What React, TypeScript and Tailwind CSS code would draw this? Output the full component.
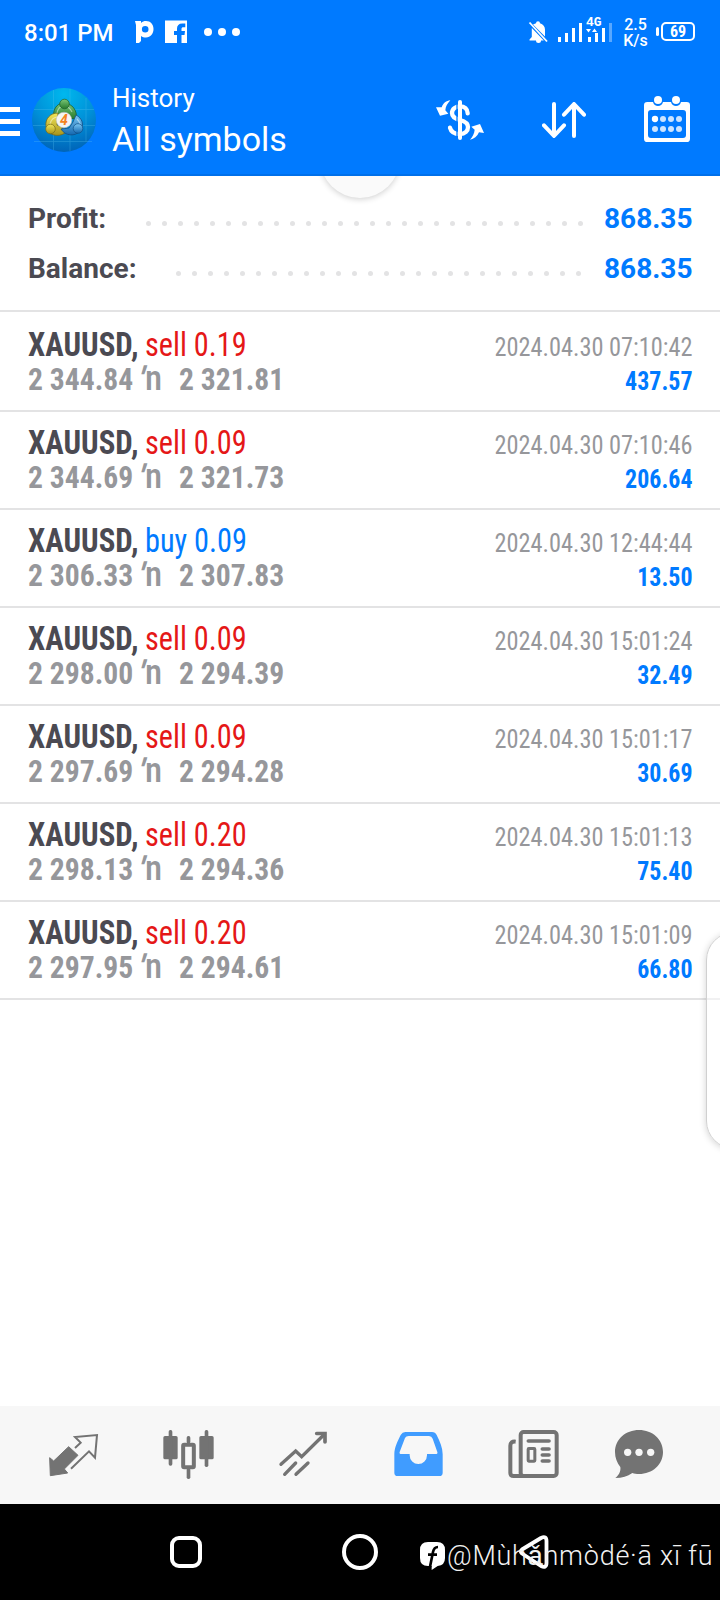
type Deal = {
  side: "sell" | "buy";
  volume: string;
  open: string;
  close: string;
  time: string;
  profit: string;
};

const deals: Deal[] = [
  { side: "sell", volume: "0.19", open: "2 344.84", close: "2 321.81", time: "2024.04.30 07:10:42", profit: "437.57" },
  { side: "sell", volume: "0.09", open: "2 344.69", close: "2 321.73", time: "2024.04.30 07:10:46", profit: "206.64" },
  { side: "buy", volume: "0.09", open: "2 306.33", close: "2 307.83", time: "2024.04.30 12:44:44", profit: "13.50" },
  { side: "sell", volume: "0.09", open: "2 298.00", close: "2 294.39", time: "2024.04.30 15:01:24", profit: "32.49" },
  { side: "sell", volume: "0.09", open: "2 297.69", close: "2 294.28", time: "2024.04.30 15:01:17", profit: "30.69" },
  { side: "sell", volume: "0.20", open: "2 298.13", close: "2 294.36", time: "2024.04.30 15:01:13", profit: "75.40" },
  { side: "sell", volume: "0.20", open: "2 297.95", close: "2 294.61", time: "2024.04.30 15:01:09", profit: "66.80" },
];

function StatusBar() {
  return (
    <div className="flex h-16 items-start text-white">
      <span className="ml-6 mt-[19px] w-[111px] whitespace-nowrap text-2xl font-medium leading-[28px]">8:01 PM</span>
      <svg className="mt-5 h-6 w-[110px]" viewBox="0 0 110 24" fill="#fff">
        {/* Palmpay mark */}
        <path fillRule="evenodd" d="M0 1h6v2c1.500-1.500 3-2 5-2 4.500 0 7.500 3.500 7.500 8s-3 8.500-7.500 8.500c-2 0-3.500-.5-5-1.500v5l-2 2H1V5z M10.200 6a3.300 3.300 0 1 0 0 6.600 3.300 3.300 0 0 0 0-6.600z" />
        {/* Facebook mark */}
        <path d="M30 0.500h22v22.500h-5.500v-8h3l.5-4h-3.500V9c0-1.200.5-1.800 2-1.800h1.800V3.500h-3c-3.500 0-5.300 2-5.300 5V11h-3v4h3v8H30z" />
        <circle cx="73" cy="12" r="4" />
        <circle cx="87" cy="12" r="4" />
        <circle cx="101" cy="12" r="4" />
      </svg>
      <svg className="ml-auto mt-5 h-6 w-[62px]" viewBox="0 0 62 24" fill="#fff">
        <path d="M5 4.500l3-1.300a2 2 0 0 1 4 0c3.200.8 5 3.600 5 6.500v6.800zM3.800 8l12 12.500H1.500v-1L3.800 17zM8 20.500h5a2.400 2.400 0 0 1-5 0z" />
        <path d="M1.500 2.500l17.500 19" stroke="#fff" strokeWidth="1.800" />
        <rect x="30" y="17" width="3" height="5" />
        <rect x="37" y="13" width="3" height="9" />
        <rect x="44" y="8" width="3" height="14" />
        <rect x="51" y="3" width="3" height="19" />
      </svg>
      <div className="relative -ml-1 mt-4 h-7 w-[30px]">
        <span className="absolute left-0 top-0 font-['Liberation_Mono',monospace] text-[13px] font-bold leading-[14px]">4G</span>
        <svg className="h-7 w-[30px]" viewBox="0 0 30 28" fill="#fff">
          <path d="M0 13h5l-2.500 3.500zM6 16h5l-2.500-3.500z" />
          <rect x="2" y="21" width="3" height="5" />
          <rect x="9" y="17" width="3" height="9" />
          <rect x="16" y="12" width="3" height="14" />
          <rect x="23" y="7" width="3" height="19" opacity=".35" />
        </svg>
      </div>
      <div className="ml-[6px] mt-[17px] w-[27px] text-center text-[16px] font-medium leading-[16px]">
        <div>2.5</div>
        <div>K/s</div>
      </div>
      <div className="ml-[7px] mt-[27px] h-[9px] w-[3px] rounded-sm bg-white" />
      <div className="ml-[2px] mr-[25px] mt-[22px] flex h-[19px] w-[34px] items-center justify-center rounded-[5px] border-2 border-white pt-px text-[16px] font-bold leading-none [font-stretch:80%]">
        69
      </div>
    </div>
  );
}

function AppLogo() {
  return (
    <svg className="ml-3 mt-6 h-16 w-16" viewBox="0 0 64 64">
      <defs>
        <radialGradient id="sky" cx=".5" cy=".1" r=".9">
          <stop offset="0" stopColor="#00b8ee" />
          <stop offset=".55" stopColor="#0090d8" />
          <stop offset="1" stopColor="#0064b8" />
        </radialGradient>
        <linearGradient id="green" x2="0" y2="1"><stop stopColor="#7cc878" /><stop offset="1" stopColor="#25792b" /></linearGradient>
        <linearGradient id="gold" x2="0" y2="1"><stop stopColor="#f2e75a" /><stop offset="1" stopColor="#a8941c" /></linearGradient>
        <linearGradient id="blue" x2="0" y2="1"><stop stopColor="#7cc8f4" /><stop offset="1" stopColor="#1468b0" /></linearGradient>
      </defs>
      <circle cx="32" cy="32" r="32" fill="url(#sky)" />
      <path d="M21.500 2v60M54 10v44M2 21.500h60M2 53.500h58M1 37.500h62M38 1v62" stroke="#5cc4f0" strokeWidth=".8" opacity=".35" />
      <path d="M22 31c-2-8 2-16 10-16s14 8 12 16l-7-1-5-6-5 6z" fill="url(#green)" stroke="#1b5f2c" strokeWidth=".8" />
      <path d="M26 25c-8 0-13 6-12 13 1 9 12 12 19 7l-3-6-5-2z" fill="url(#gold)" stroke="#75691a" strokeWidth=".8" />
      <path d="M44 27c6 3 9 10 4 16-5 6-15 5-19-2l8-1 4-6z" fill="url(#blue)" stroke="#114f86" strokeWidth=".8" />
      <path d="M25 25c1-5 4-7 7-7s6 2 8 6M18 36c1-4 4-7 8-7M45 31c3 3 4 6 2 9" stroke="#fff" strokeWidth="1.200" fill="none" opacity=".45" />
      <circle cx="32.500" cy="16" r="4.800" fill="url(#green)" stroke="#1b5f2c" strokeWidth=".7" />
      <circle cx="18.500" cy="41" r="4.800" fill="url(#gold)" stroke="#75691a" strokeWidth=".7" />
      <circle cx="46" cy="40.500" r="4.800" fill="url(#blue)" stroke="#114f86" strokeWidth=".7" />
      <circle cx="32" cy="32" r="7.800" fill="#f4f4f4" stroke="#bbb" strokeWidth=".5" />
      <text x="32" y="37" textAnchor="middle" fontSize="14" fontWeight="700" fontStyle="italic" fill="#f58220">4</text>
    </svg>
  );
}

function Header() {
  return (
    <div className="flex h-28 items-start border-b-2 border-[#0070ea] text-white">
      <div className="mt-[43px] flex w-5 flex-col gap-[7px]">
        <div className="h-[5px] bg-white" />
        <div className="h-[5px] bg-white" />
        <div className="h-[5px] bg-white" />
      </div>
      <AppLogo />
      <div className="ml-4 mt-[18px] whitespace-nowrap">
        <div className="text-[26px] leading-[32px]">History</div>
        <div className="mt-[5px] text-[34px] leading-[40px]">All symbols</div>
      </div>
      {/* currency exchange */}
      <svg className="ml-auto mt-9 h-10 w-12" viewBox="228 300 144 120" fill="none">
        <path d="M323 340c0-13-10-21-23-21s-24 8-24 20 9 17 24 21 24 9 24 21-9 21-24 21-27-7-30-19" stroke="#fff" strokeWidth="13" strokeLinecap="round" />
        <path d="M291 300v120" stroke="#007aff" strokeWidth="4" />
        <path d="M300 306v108" stroke="#fff" strokeWidth="12" strokeLinecap="round" />
        <path d="M271 301c-12 1-22 9-26 21l-17 0 12 25 25-6-9-10c1-11 6-20 15-30z" fill="#fff" />
        <path d="M330 419c12-2 22-10 27-22l15 2-12-27-26 8 10 9c-1 11-6 21-14 30z" fill="#fff" />
      </svg>
      <svg className="ml-[58px] mt-[38px] h-9 w-11" viewBox="546 306 132 108" fill="none" stroke="#fff" strokeWidth="12" strokeLinecap="round" strokeLinejoin="round">
        <path d="M582 312v95M552 376l30 32 30-32M642 408v-95M612 344l30-32 30 32" />
      </svg>
      <svg className="ml-[58px] mr-[30px] mt-8 h-[46px] w-[46px]" viewBox="852 288 138 138" fill="#fff">
        <path fillRule="evenodd" d="M862 306h17c2 8 8 12 15 12s13-4 15-12h24c2 8 8 12 15 12s13-4 15-12h17q10 0 10 10v100q0 10-10 10H862q-10 0-10-10V316q0-10 10-10zM873 330q-9 0-9 9v66q0 9 9 9h96q9 0 9-9v-66q0-9-9-9z" />
        <circle cx="894" cy="300" r="12" />
        <circle cx="948" cy="300" r="12" />
        <circle cx="885" cy="357" r="9.500" />
        <g opacity=".8">
          <circle cx="909" cy="357" r="9" />
          <circle cx="933" cy="357" r="9" />
          <circle cx="957" cy="357" r="9" />
          <circle cx="885" cy="387" r="9" />
          <circle cx="909" cy="387" r="9" />
          <circle cx="933" cy="387" r="9" />
          <circle cx="957" cy="387" r="9" />
        </g>
      </svg>
    </div>
  );
}

function SummaryRow({ label, value, dots }: { label: string; value: string; dots: number }) {
  return (
    <div className="flex h-[50px] items-center text-[28px] font-bold leading-none">
      <span className="text-[#4b4a52]">{label}</span>
      <div className={`ml-auto mt-[9px] flex gap-[11px] ${dots === 28 ? "mr-[21px]" : "mr-[23px]"}`}>
        {Array.from({ length: dots }, (_, i) => (
          <span key={i} className="h-[5px] w-[5px] rounded-full bg-[#e3e3e4]" />
        ))}
      </div>
      <span className="w-[88px] text-right text-[#007aff]">{value}</span>
    </div>
  );
}

function DealRow({ deal }: { deal: Deal }) {
  return (
    <div className="flex h-[98px] justify-between whitespace-nowrap border-b-2 border-[#e3e3e4] pl-7 pr-[27px] pt-[14px] font-['Roboto_Condensed','Roboto'] [font-stretch:75%]">
      <div>
        <div className="flex text-[33px] leading-[34px]">
          <span className="w-[116.500px] origin-left scale-x-[0.935] font-bold text-[#4b4a52]">XAUUSD,</span>
          <span className={`origin-left scale-x-[0.917] ${deal.side === "sell" ? "text-[#e51717]" : "text-[#007aff]"}`}>
            {deal.side} {deal.volume}
          </span>
        </div>
        <div className="flex text-[32px] font-bold leading-[34px] text-[#96979b]">
          <span className="w-[111px] origin-left scale-x-[0.925]">{deal.open}</span>
          <span className="w-[6px] -skew-x-[16deg] text-[33px] font-bold leading-[34px]">′</span>
          <span className="w-[34px] text-[35px] font-medium [font-stretch:100%]">n</span>
          <span className="origin-left scale-x-[0.925]">{deal.close}</span>
        </div>
      </div>
      <div className="pt-[2px] text-right text-[26px] leading-[34px]">
        <div className="origin-right scale-x-[0.936] text-[#96979b]">{deal.time}</div>
        <div className="origin-right scale-x-[0.92] font-bold text-[#007aff]">{deal.profit}</div>
      </div>
    </div>
  );
}

function TabBar() {
  return (
    <div className="flex h-[98px] bg-[#f7f7f7] pl-4">
      {/* quotes */}
      <svg className="h-[98px] w-[115px]" viewBox="48 48 345 294" fill="none" stroke="#737373">
        <path d="M206 170l28 26-41 41 10 12-52 8-2-54 12 10z" fill="#737373" strokeWidth="3" strokeLinejoin="round" />
        <path d="M213 236l54-52 18 19 6-68-66 6 17 17-17 16" strokeWidth="6" />
      </svg>
      {/* chart */}
      <svg className="h-[98px] w-[115px]" viewBox="393 48 345 294" fill="#737373">
        <rect x="490" y="138" width="43" height="70" rx="5" />
        <rect x="506" y="120" width="11" height="107" rx="5" />
        <rect x="598" y="138" width="43" height="70" rx="5" />
        <rect x="614" y="120" width="11" height="111" rx="5" />
        <rect x="560" y="138" width="11" height="22" rx="5" />
        <rect x="560" y="234" width="11" height="33" rx="5" />
        <rect x="549.500" y="164.500" width="32" height="67" rx="3" fill="none" stroke="#737373" strokeWidth="12" />
      </svg>
      {/* trade */}
      <svg className="h-[98px] w-[115px]" viewBox="738 48 345 294" fill="none" stroke="#737373" strokeWidth="10" strokeLinecap="round">
        <path d="M843 223l44-40 18 17 66-65M854 253l33-34M888 253l36-34" />
        <path d="M950 130.500h25V156" strokeWidth="11" />
      </svg>
      {/* history */}
      <svg className="h-[98px] w-[115px]" viewBox="3 48 345 294" fill="#409cff">
        <path fillRule="evenodd" d="M136 126h80q10 0 14 9c10 20 18 38 18 58v55q0 10-10 10H113q-10 0-10-10v-55c0-20 9-38 19-58q5-9 14-9zM146 138q-8 0-11 6l-16 42q-2 6 5 6h25v4a26 26 0 0 0 52 0v-4h26q7 0 5-6l-14-40q-3-8-11-8z" />
      </svg>
      {/* news */}
      <svg className="h-[98px] w-[115px]" viewBox="348 48 345 294" fill="none" stroke="#737373">
        <rect x="482" y="126" width="108" height="132" rx="9" strokeWidth="12" />
        <path d="M467 155q-16-2-16 12v82q0 9 10 9h110" strokeWidth="12" />
        <path d="M505 153h62M547 177h20M547 195h20M547 213h20" strokeWidth="11" strokeLinecap="round" />
        <rect x="504.500" y="175.500" width="20" height="38" strokeWidth="9" rx="2" />
      </svg>
      {/* messages */}
      <svg className="h-[98px] w-[115px]" viewBox="693 48 345 294" fill="#737373">
        <path d="M837 120c40 0 72 28 72 66s-32 66-72 66c-8 0-14-1-20-3-15 10-30 15-51 15 10-8 17-19 15-33-10-12-16-28-16-45 0-38 32-66 72-66z" />
        <circle cx="803" cy="187" r="11" fill="#f7f7f7" />
        <circle cx="837" cy="187" r="11" fill="#f7f7f7" />
        <circle cx="872" cy="187" r="11" fill="#f7f7f7" />
      </svg>
    </div>
  );
}

function NavBar() {
  return (
    <div className="relative flex h-24 items-start bg-black text-white">
      <div className="ml-[170px] mt-8 h-8 w-8 rounded-[9px] border-4 border-white" />
      <div className="ml-[140px] mt-[30px] h-9 w-9 rounded-full border-4 border-white" />
      <svg className="ml-[140px] mt-[30px] h-9 w-8" viewBox="0 0 32 36" fill="none" stroke="#fff" strokeWidth="3.800" strokeLinejoin="round">
        <path d="M4 15.500L23 4q5.500-2.500 5.500 3v22q0 5.500-5.500 3L4 19.500q-2.500-2 0-4z" />
      </svg>
      {/* name tag printed over the navigation keys */}
      <div className="absolute left-[420px] top-[34px] flex items-center whitespace-nowrap text-[#f2f2f2]">
        <svg className="mr-[2px] h-7 w-[25px] shrink-0" viewBox="0 0 75 84">
          <path d="M24 0h27q24 0 24 24v24q0 22-22 24l-18 12v-12H24Q0 72 0 48V24Q0 0 24 0z" fill="#fff" />
          <path d="M30 74l9-44q3-15 15-15M24 38h27" stroke="#000" strokeWidth="8" fill="none" />
        </svg>
        <span className="text-[27px] font-light leading-[36px] tracking-[0.75px]">@Mùhǎnmòdé·ā xī fū</span>
      </div>
    </div>
  );
}

export default function App() {
  return (
    <div className="relative flex h-[1600px] w-[720px] flex-col overflow-hidden bg-white font-['Roboto',sans-serif]">
      <div className="bg-[#007aff]">
        <StatusBar />
        <Header />
      </div>
      <div className="relative flex-1 overflow-hidden">
        {/* refresh bubble sliding out from under the header */}
        <div className="absolute -top-[58px] left-[320px] h-20 w-20 rounded-full bg-[#fafafa] shadow-[0_1px_6px_rgba(0,0,0,0.2)]" />
        <div className="h-[136px] border-b-2 border-[#e3e3e4] px-7 pt-[18px]">
          <SummaryRow label="Profit:" value="868.35" dots={28} />
          <SummaryRow label="Balance:" value="868.35" dots={26} />
        </div>
        <div className="pt-[2px]">
          {deals.map((deal) => (
            <DealRow key={deal.time} deal={deal} />
          ))}
        </div>
        {/* edge handle */}
        <div className="absolute left-[706px] top-[756px] h-[217px] w-20 rounded-[28px] border border-[#d0d0d0] bg-white/50 shadow-[0_1px_7px_rgba(0,0,0,0.18)]" />
      </div>
      <TabBar />
      <NavBar />
    </div>
  );
}
